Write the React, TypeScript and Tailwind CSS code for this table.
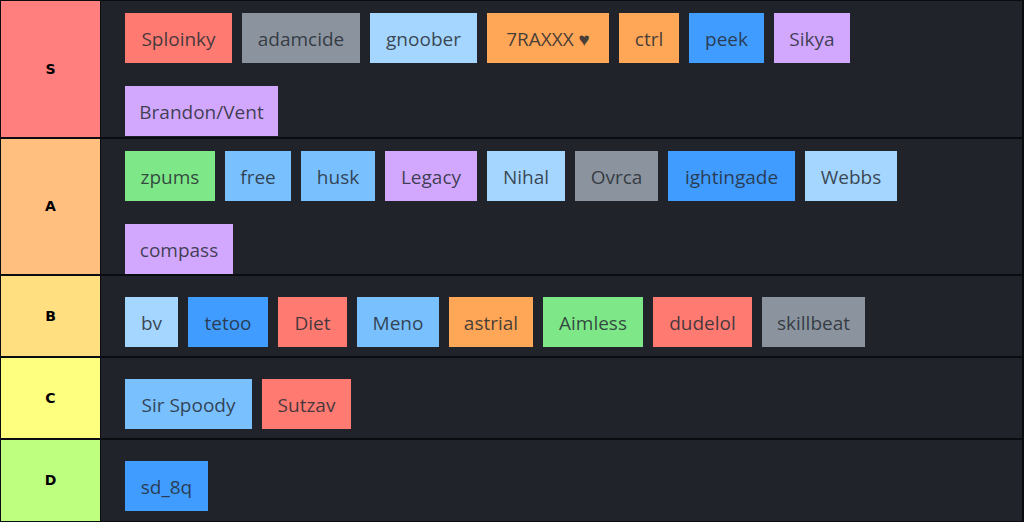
const RED = "bg-[#ff7b72]";
const GRAY = "bg-[#8b949e]";
const SKY = "bg-[#a5d6ff]";
const ORANGE = "bg-[#ffa657]";
const BLUE = "bg-[#409cff]";
const MID = "bg-[#79c0ff]";
const PURPLE = "bg-[#d2a8ff]";
const GREEN = "bg-[#7ee787]";

// name, colour, width
type Chip = [string, string, string];

const tiers: { label: string; color: string; height: string; top: string; chips: Chip[] }[] = [
  {
    label: "S",
    color: "bg-[#ff7f7f]",
    height: "h-[136px]",
    top: "pt-3",
    chips: [
      ["Sploinky", RED, "w-[107px]"],
      ["adamcide", GRAY, "w-[118px]"],
      ["gnoober", SKY, "w-[107px]"],
      ["7RAXXX ♥", ORANGE, "w-[122px]"],
      ["ctrl", ORANGE, "w-[60px]"],
      ["peek", BLUE, "w-[75px]"],
      ["Sikya", PURPLE, "w-[76px]"],
      ["Brandon/Vent", PURPLE, "w-[153px]"],
    ],
  },
  {
    label: "A",
    color: "bg-[#ffbf7f]",
    height: "h-[135px]",
    top: "pt-3",
    chips: [
      ["zpums", GREEN, "w-[90px]"],
      ["free", MID, "w-[66px]"],
      ["husk", MID, "w-[74px]"],
      ["Legacy", PURPLE, "w-[92px]"],
      ["Nihal", SKY, "w-[78px]"],
      ["Ovrca", GRAY, "w-[83px]"],
      ["ightingade", BLUE, "w-[127px]"],
      ["Webbs", SKY, "w-[92px]"],
      ["compass", PURPLE, "w-[108px]"],
    ],
  },
  {
    label: "B",
    color: "bg-[#ffdf7f]",
    height: "h-[80px]",
    top: "pt-[21px]",
    chips: [
      ["bv", SKY, "w-[53px]"],
      ["tetoo", BLUE, "w-[80px]"],
      ["Diet", RED, "w-[69px]"],
      ["Meno", MID, "w-[82px]"],
      ["astrial", ORANGE, "w-[84px]"],
      ["Aimless", GREEN, "w-[100px]"],
      ["dudelol", RED, "w-[99px]"],
      ["skillbeat", GRAY, "w-[103px]"],
    ],
  },
  {
    label: "C",
    color: "bg-[#ffff7f]",
    height: "h-[80px]",
    top: "pt-[21px]",
    chips: [
      ["Sir Spoody", MID, "w-[127px]"],
      ["Sutzav", RED, "w-[89px]"],
    ],
  },
  {
    label: "D",
    color: "bg-[#bfff7f]",
    height: "h-[80px]",
    top: "pt-[21px]",
    chips: [["sd_8q", BLUE, "w-[83px]"]],
  },
];

export default function App() {
  return (
    <div
      className="flex h-[522px] w-[1024px] flex-col overflow-hidden border border-r-2 border-[#0b0c0f] bg-[#0b0c0f]"
      style={{ fontFamily: '"Open Sans", "Noto Sans", sans-serif' }}
    >
      {tiers.map((t, i) => (
        <div
          key={t.label}
          className={`flex ${t.height} ${i < tiers.length - 1 ? "mb-[2px] flex-none" : "flex-1"}`}
        >
          <div
            className={`flex w-[100px] flex-none items-center justify-center border-r border-[#0b0c0f] ${t.color}`}
          >
            <span className="text-[14px] font-bold text-black" style={{ fontFamily: '"DejaVu Sans", sans-serif' }}>
              {t.label}
            </span>
          </div>
          <div
            className={`flex flex-1 flex-wrap content-start gap-x-[10px] gap-y-[23px] bg-[#202329] pl-6 pr-6 ${t.top}`}
          >
            {t.chips.map(([name, bg, w]) => (
              <div
                key={name}
                className={`flex h-[50px] items-center justify-center pt-[3px] text-[19px] text-[#262b33]/85 ${bg} ${w}`}
              >
                {name}
              </div>
            ))}
          </div>
        </div>
      ))}
    </div>
  );
}
